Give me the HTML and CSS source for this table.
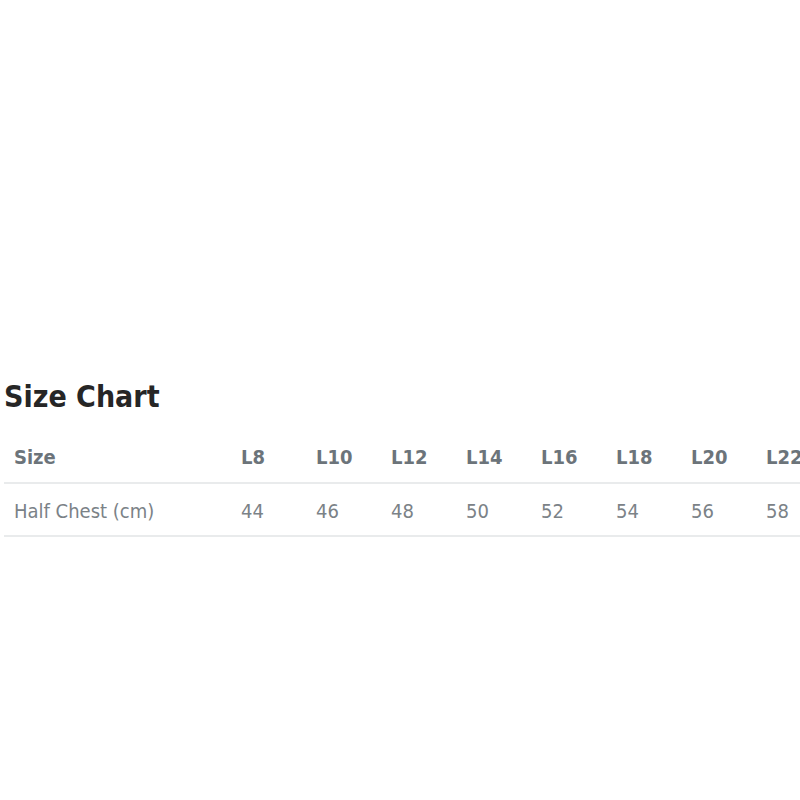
FILE: index.html
```html
<!DOCTYPE html>
<html>
<head>
<meta charset="utf-8">
<link rel="stylesheet" href="styles.css">
</head>
<body>
<div class="page">
  <h2 class="title">Size Chart</h2>
  <div class="scroller">
    <div class="chart">
      <div class="row head">
        <div class="cell label">Size</div>
        <div class="cell">L8</div>
        <div class="cell">L10</div>
        <div class="cell">L12</div>
        <div class="cell">L14</div>
        <div class="cell">L16</div>
        <div class="cell">L18</div>
        <div class="cell">L20</div>
        <div class="cell">L22</div>
      </div>
      <div class="row body-row">
        <div class="cell label">Half Chest (cm)</div>
        <div class="cell">44</div>
        <div class="cell">46</div>
        <div class="cell">48</div>
        <div class="cell">50</div>
        <div class="cell">52</div>
        <div class="cell">54</div>
        <div class="cell">56</div>
        <div class="cell">58</div>
      </div>
    </div>
  </div>
</div>
</body>
</html>
```
FILE: styles.css
```css
html, body {
  margin: 0;
  padding: 0;
  background: #fff;
  overflow: hidden;
}
.page {
  padding: 378px 0 0 4px;
  font-family: "DejaVu Sans Condensed", "DejaVu Sans", sans-serif;
}
.title {
  margin: 0 0 15px 0;
  font-size: 30px;
  font-weight: bold;
  color: #262626;
  line-height: 38px;
}
.scroller {
  overflow: hidden;
  width: 796px;
}
.chart {
  width: 904px;
}
.row {
  display: grid;
  grid-template-columns: 227px repeat(8, 75px);
  height: 51px;
  align-items: center;
  border-bottom: 2px solid #e9ebec;
  color: #7b8287;
  font-size: 20px;
}
.head {
  font-weight: bold;
  color: #6c747a;
}
.body-row {
  padding-top: 3px;
  height: 48px;
}
.cell {
  padding-left: 10px;
  white-space: nowrap;
}
```
